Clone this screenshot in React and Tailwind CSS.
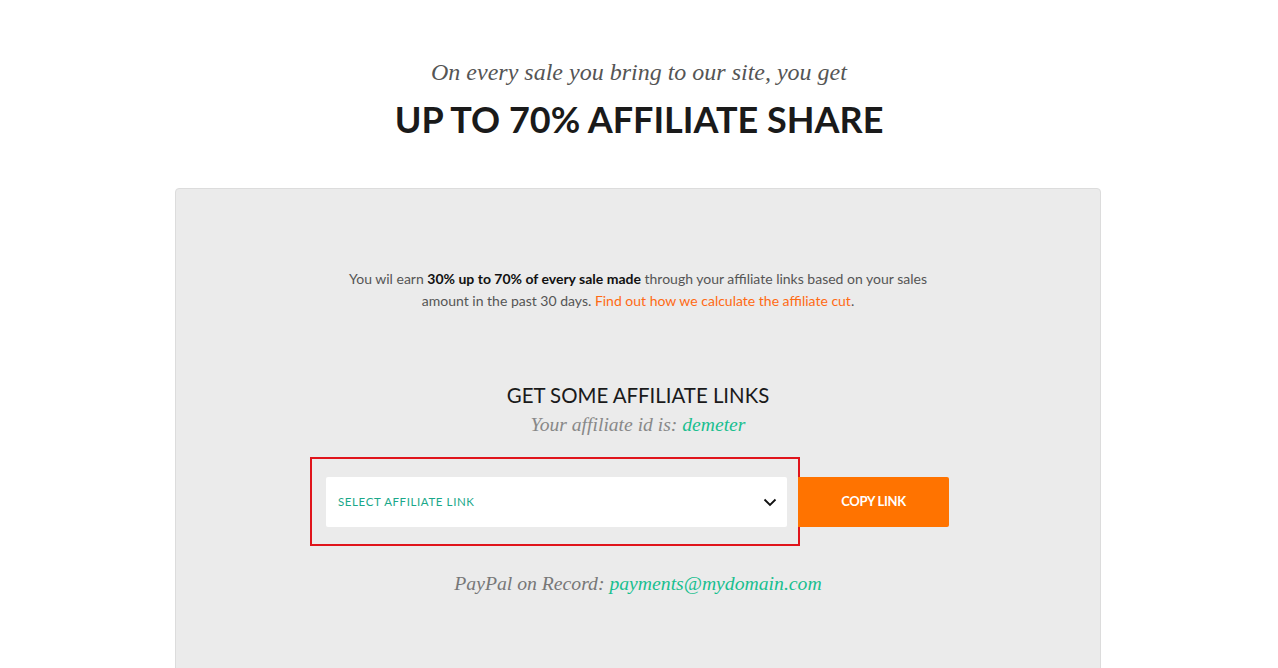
import React from "react";

export default function App() {
  return (
    <div className="min-h-[668px] bg-white overflow-hidden" style={{ fontFamily: 'Lato, "Liberation Sans", sans-serif' }}>
      <div className="pt-[57px] text-center">
        <p className="italic leading-[30px] text-[#555]" style={{ fontFamily: '"Liberation Serif", serif', fontSize: "24px" }}>
          On every sale you bring to our site, you get
        </p>
        <h1 className="mt-[12px] text-[36px] leading-[40px] font-bold text-[#1a1a1a]">
          UP TO 70% AFFILIATE SHARE
        </h1>
      </div>
      <div className="mt-[49px] w-[926px] ml-[175px] rounded-[4px] border border-[#dcdcdc] bg-[#ebebeb] pt-[79px] pb-[80px]">
        <p className="mx-auto w-[620px] text-center text-[14px] leading-[22px] text-[#555]">
          You wil earn <b className="font-bold text-[#111]">30% up to 70% of every sale made</b> through your affiliate links based on your sales amount in the past 30 days.{" "}
          <span className="text-[#ff6a13]">Find out how we calculate the affiliate cut</span>.
        </p>
        <h2 className="mt-[69px] text-center text-[20.4px] leading-[28px] text-[#1a1a1a]">GET SOME AFFILIATE LINKS</h2>
        <p className="mt-[2px] text-center italic leading-[28px] text-[#888]" style={{ fontFamily: '"Liberation Serif", serif', fontSize: "19.6px" }}>
          Your affiliate id is: <span className="text-[#19bf8f]">demeter</span>
        </p>
        <div className="mt-[18px] flex justify-center pr-[17px]">
          <div className="flex h-[89px] w-[490px] items-start border-2 border-[#e0141b] pt-[18px] pl-[14px] pr-[11px]">
            <div className="flex h-[50px] flex-1 items-center justify-between rounded-[2px] bg-white pl-[12px] pr-[10px]">
              <span className="text-[11.5px] tracking-[0.6px] text-[#1aa88a]">SELECT AFFILIATE LINK</span>
              <svg width="14" height="9" viewBox="0 0 14 9" fill="none">
                <path d="M1.5 1.5 L7 7 L12.5 1.5" stroke="#111" strokeWidth="1.8" />
              </svg>
            </div>
          </div>
          <div className="-ml-[2px] mt-[20px] flex h-[50px] w-[151px] items-center justify-center rounded-r-[2px] bg-[#ff7300] text-[13px] font-bold text-white tracking-[-0.3px]">
            COPY LINK
          </div>
        </div>
        <p className="mt-[23px] text-center italic text-[#777]" style={{ fontFamily: '"Liberation Serif", serif', fontSize: "19.7px" }}>
          PayPal on Record: <span className="text-[#19bf8f]">payments@mydomain.com</span>
        </p>
      </div>
    </div>
  );
}
